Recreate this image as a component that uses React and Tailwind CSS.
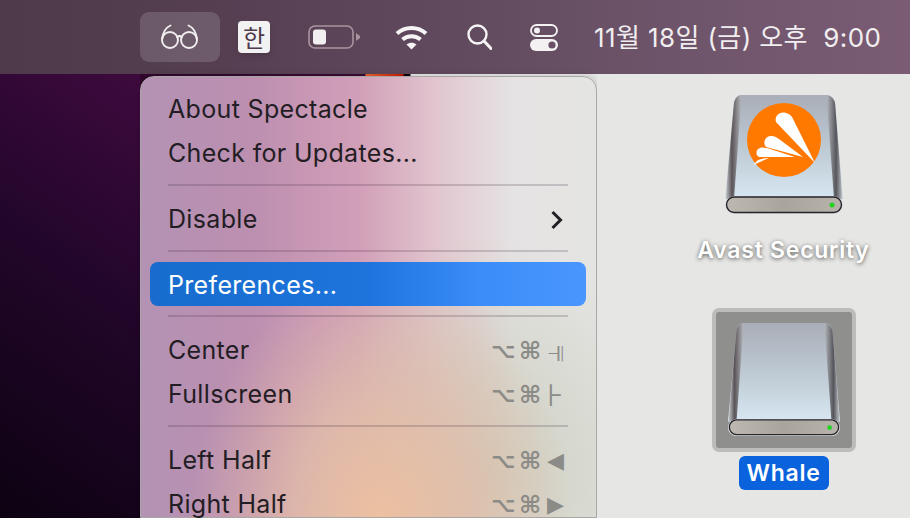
import { useId } from "react";

const Glasses = () => (
  <svg width="40" height="28" viewBox="0 0 40 28" fill="none" stroke="#f2eff1" strokeWidth="1.900" strokeLinecap="round">
    <circle cx="10" cy="17" r="8" />
    <circle cx="29" cy="17" r="8" />
    <path d="M17 14c1.600-1.200 3.400-1.200 5 0" />
    <path d="M2.200 15.500C3 9.500 6 4.500 10.500 2.500" />
    <path d="M36.800 15.500C36 9.500 33 4.500 28.500 2.500" />
  </svg>
);

const Battery = () => (
  <svg width="52" height="24" viewBox="0 0 52 24" fill="none">
    <rect x="1" y="1" width="44" height="22" rx="6" stroke="#a9949f" strokeWidth="1.600" />
    <rect x="5" y="4.500" width="13" height="15" rx="3" fill="#f1eff0" />
    <path d="M48 8l4 3v2l-4 3z" fill="#a9949f" />
  </svg>
);

const Wifi = () => (
  <svg width="33" height="26" viewBox="0 0 33 26" fill="none" stroke="#f6f4f5" strokeWidth="4">
    <path d="M2 9.500C10 2 23 2 31 9.500" />
    <path d="M7.500 15.500C12.500 11 20.500 11 25.500 15.500" />
    <path d="M11.500 20.600C14.500 18 18.500 18 21.500 20.600L16.500 25.500z" fill="#f6f4f5" stroke="none" />
  </svg>
);

const Search = () => (
  <svg width="25" height="26" viewBox="0 0 25 26" fill="none" stroke="#f6f4f5" strokeWidth="2.400" strokeLinecap="round">
    <circle cx="10.500" cy="10.500" r="9" />
    <path d="M17 17l7 7.500" strokeWidth="3" />
  </svg>
);

const Toggles = () => (
  <svg width="28" height="27" viewBox="0 0 28 27">
    <rect x="1" y="1" width="26" height="11" rx="5.500" fill="none" stroke="#f3f1f2" strokeWidth="1.800" />
    <circle cx="7" cy="6.500" r="3" fill="#f3f1f2" />
    <rect y="15" width="28" height="12" rx="6" fill="#f3f1f2" />
    <circle cx="22" cy="21" r="3.600" fill="#6a5066" />
  </svg>
);

const Drive = ({ width, logo }) => {
  const id = useId();
  return (
    <svg width={width} height={width} viewBox="0 0 120 120" className="block">
      <defs>
        <linearGradient id={`${id}face`} x1="0" y1="0" x2="0" y2="1">
          <stop offset="0" stopColor="#a9aeb8" />
          <stop offset="0.5" stopColor="#bdc9d3" />
          <stop offset="1" stopColor="#d7e7f1" />
        </linearGradient>
        <linearGradient id={`${id}left`} x1="0" y1="0" x2="1" y2="0">
          <stop offset="0" stopColor="#c9ccd0" />
          <stop offset="0.4" stopColor="#5a5458" />
          <stop offset="1" stopColor="#b5b8bd" />
        </linearGradient>
        <linearGradient id={`${id}right`} x1="0" y1="0" x2="1" y2="0">
          <stop offset="0" stopColor="#b5b8bd" />
          <stop offset="0.6" stopColor="#55565c" />
          <stop offset="1" stopColor="#bfc3c8" />
        </linearGradient>
        <linearGradient id={`${id}bar`} x1="0" y1="0" x2="1" y2="0">
          <stop offset="0" stopColor="#bdb8b0" />
          <stop offset="0.5" stopColor="#aaa59c" />
          <stop offset="1" stopColor="#b7b2aa" />
        </linearGradient>
      </defs>
      <path d="M18 0h84c5 0 8 3 9 8l8 96H1l9-96c1-5 3-8 8-8z" fill={`url(#${id}face)`} />
      <path d="M17.500 0.200C13 0.500 11 4 10 8L1.500 104H10L17 8c0-3 0-6 0.500-7.800z" fill={`url(#${id}left)`} />
      <path d="M102.500 0.200C107 0.500 110 4 111 8l7.500 96H110L103 8c0-3 0-6-0.500-7.800z" fill={`url(#${id}right)`} />
      <rect x="1" y="101" width="118" height="18" rx="9" fill="#dcdfe2" />
      <rect x="2.500" y="102" width="115" height="15.500" rx="7.700" fill={`url(#${id}bar)`} stroke="#26242a" strokeWidth="1.400" />
      <circle cx="108" cy="110" r="2.500" fill="#1fd51f" />
      {logo && (
        <g>
          <circle cx="60" cy="45" r="37" fill="#ff7800" />
          <path d="M52 27c-2-6 4-11 10-9 4 1 6 3 8 8l21 42z" fill="#fff" />
          <path d="M42 52c-4-5 0-12 6-11 2 0 4 1 7 3l24 18z" fill="#fff" />
          <path d="M35 62c-4-2-3-8 1-9 2-1 4 0 7 0l28 9z" fill="#fff" />
          <path d="M29 70l16-7c-4 0-8 1-11 2z" fill="#fff" />
        </g>
      )}
    </svg>
  );
};

const Sep = () => <div className="h-[2px] ml-[27px] mr-[28px] mt-[9px] mb-[11px] bg-[#3c283c]/20" />;

const Keys = ({ last, big }) => (
  <span className="flex items-center text-[#8b8b87] font-['DejaVu_Sans',sans-serif] font-bold leading-none">
    <span className="w-[28px] text-[21px]">⌥</span>
    <span className="w-[28px] text-[24px]">⌘</span>
    <span className={big ? "w-[21px] text-[31px] font-normal" : "w-[21px] text-[22px] font-normal"}>{last}</span>
  </span>
);

const Row = ({ label, children }) => (
  <div className="h-[44px] ml-[9px] mr-[10px] px-[18px] pt-[2px] flex items-center justify-between">
    <span>{label}</span>
    {children}
  </div>
);

export default function App() {
  return (
    <div className="w-[910px] h-[518px] overflow-hidden flex flex-col font-['Inter','Noto_Sans_CJK_KR',sans-serif]">
      <div className="h-[74px] shrink-0 flex items-center pl-[140px] bg-[linear-gradient(90deg,#4e3a4a,#553f51_25%,#6c5368_70%,#7a5c75)] text-[#f1eef0]">
        <div className="w-[80px] h-[50px] rounded-[9px] bg-white/15 flex items-center justify-center">
          <Glasses />
        </div>
        <div className="w-[32px] h-[32px] ml-[18px] rounded-[4px] bg-[#f3f2f3] text-[#4f3b4c] text-[24px] leading-none flex items-center justify-center font-['Noto_Sans_CJK_KR',sans-serif] shadow-md">
          한
        </div>
        <div className="ml-[38px]"><Battery /></div>
        <div className="ml-[35px]"><Wifi /></div>
        <div className="ml-[39px]"><Search /></div>
        <div className="ml-[38px]"><Toggles /></div>
        <div className="ml-[36px] text-[26px] whitespace-pre tracking-[0.4px]">11월 18일 (금) 오후  9:00</div>
      </div>

      <div className="flex-1 flex min-h-0 bg-[linear-gradient(90deg,#2b0628_0,#3a0a35_365px,#e8642a_366px,#d01808_403px,#100510_404px,#100510_410px,#e6e6e4_411px)]">
        <div className="w-[140px] shrink-0 bg-[linear-gradient(215deg,#3e0a3e,#22062a_45%,#0d0212)]" />

        <div className="w-[457px] shrink-0 mt-[2px] pt-[10px] pb-4 rounded-t-[14px] border border-[#a9a7a5] shadow-[2px_0_8px_rgba(0,0,0,0.15)] text-[25px] tracking-[0.33px] text-[#231d24] bg-[radial-gradient(ellipse_190px_260px_at_240px_450px,#edc09f_0%,#e3bda8cc_45%,#e3bda800_100%),radial-gradient(ellipse_200px_240px_at_340px_400px,#c4c8b4cc_0%,#c4c8b400_100%),linear-gradient(90deg,#b392b4_0%,#bd8fb0_25%,#d29fb8_48%,#e2c8d0_66%,#e5e3e3_82%,#e4e4e2_100%)]">
          <Row label="About Spectacle" />
          <Row label="Check for Updates..." />
          <Sep />
          <Row label="Disable">
            <svg width="14" height="20" viewBox="0 0 14 20" fill="none" stroke="#231d24" strokeWidth="3" className="mr-[4px]">
              <path d="M2.500 2l8 8-8 8" />
            </svg>
          </Row>
          <Sep />
          <div className="h-[44px] ml-[9px] mr-[10px] -mt-px mb-[2px] px-[18px] pt-[3px] flex items-center rounded-[8px] text-white bg-[linear-gradient(90deg,#176ccd,#1e74dc_50%,#3a8cf8_75%,#4a96ff)]">
            Preferences...
          </div>
          <Sep />
          <Row label="Center"><Keys last="⫣" big /></Row>
          <Row label="Fullscreen"><Keys last="⊦" big /></Row>
          <Sep />
          <Row label="Left Half"><Keys last="◀" /></Row>
          <Row label="Right Half"><Keys last="▶" /></Row>
        </div>

        <div className="flex-1 bg-[#e6e6e4] pt-[21px] pl-[100px]">
          <div className="w-[173px] flex flex-col items-center">
            <Drive width={120} logo />
            <div className="mt-[20px] h-[30px] leading-[30px] whitespace-nowrap text-[23px] tracking-[0.75px] font-semibold text-white [text-shadow:0_1px_4px_rgba(0,0,0,0.65)]">
              Avast Security
            </div>
            <div className="mt-[43px] w-[144px] h-[144px] rounded-[7px] border-4 border-[#bcbcba] bg-[#8f8f8d] flex items-center justify-center">
              <Drive width={114} />
            </div>
            <div className="mt-[4px] w-[90px] h-[34px] rounded-[6px] bg-[#0a63dc] text-white text-[23px] tracking-[0.75px] font-semibold flex items-center justify-center">
              Whale
            </div>
          </div>
        </div>
      </div>
    </div>
  );
}
